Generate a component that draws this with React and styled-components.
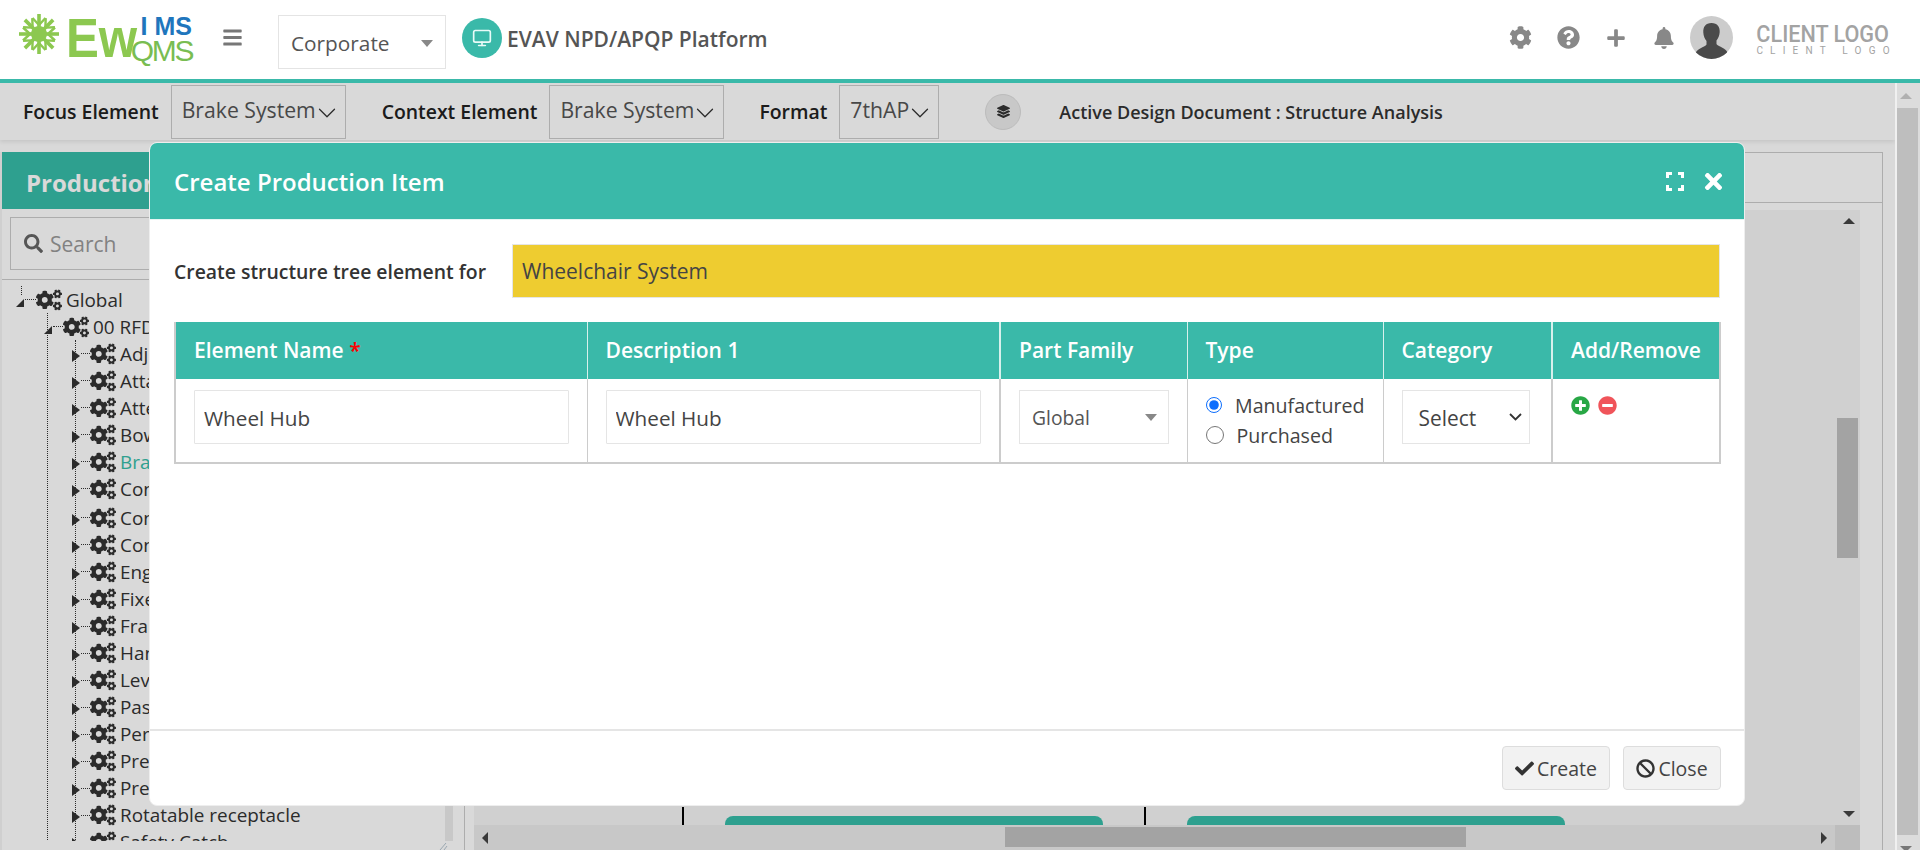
import React from "react";
import styled, { createGlobalStyle } from "styled-components";
import {
  FaBan,
  FaBars,
  FaBell,
  FaCheck,
  FaCog,
  FaCogs,
  FaLayerGroup,
  FaMinusCircle,
  FaPlus,
  FaPlusCircle,
  FaQuestionCircle,
  FaSearch,
  FaTimes,
} from "react-icons/fa";
import { ChevronDown, Monitor } from "lucide-react";

const TEAL = "#3ab9a9";

const selectArrow =
  "data:image/svg+xml,%3Csvg xmlns='http://www.w3.org/2000/svg' width='13' height='8' viewBox='0 0 13 8' fill='none' stroke='%23333' stroke-width='1.8'%3E%3Cpath d='M1 1l5.5 5.5L12 1'/%3E%3C/svg%3E";

const GlobalStyle = createGlobalStyle`
  html, body {
    margin: 0;
    padding: 0;
    height: 850px;
    overflow: hidden;
    background: #fff;
  }
  * { box-sizing: border-box; }
  body {
    font-family: "Open Sans", "Liberation Sans", sans-serif;
    color: #333;
  }
`;

const Page = styled.div`
  width: 1920px;
  height: 850px;
  display: flex;
  flex-direction: column;
`;

/* top bar */
const Header = styled.header`
  height: 83px;
  flex: none;
  display: flex;
  align-items: center;
  padding: 0 30px 4px 18px;
  background: #fff;
  border-bottom: 4px solid ${TEAL};
`;

const Logo = styled.div`
  width: 174px;
  height: 50px;
  display: flex;
  align-items: flex-start;
  flex: none;
`;

const LogoWord = styled.span`
  font-family: "Liberation Sans", sans-serif;
  font-size: 56px;
  font-weight: 700;
  line-height: 50px;
  color: #8cc850;
  margin-left: 6px;
  width: 66px;
  transform: scaleX(0.88);
  transform-origin: left center;
`;

const LogoStack = styled.div`
  display: flex;
  flex-direction: column;
  align-items: flex-end;
  font-family: "Liberation Sans", sans-serif;
  width: 60px;
  padding-top: 3px;
`;

const LogoIms = styled.span`
  font-size: 25px;
  line-height: 20px;
  font-weight: 700;
  color: #1f76bd;
`;

const LogoQms = styled.span`
  font-size: 30px;
  line-height: 30px;
  color: #79bd52;
  letter-spacing: -2.4px;
`;

const Burger = styled.div`
  margin-left: 30px;
  display: flex;
  color: #777;
  font-size: 21px;
`;

const CorpSelect = styled.div`
  margin: 9px 0 0 35px;
  width: 168px;
  height: 54px;
  border: 1px solid #e4e4e4;
  display: flex;
  align-items: center;
  justify-content: space-between;
  padding: 2px 12px 0 12px;
  font-size: 20.8px;
  color: #555;
`;

const Caret = styled.span`
  width: 0;
  height: 0;
  border-left: 6px solid transparent;
  border-right: 6px solid transparent;
  border-top: 7px solid #888;
`;

const MonitorBadge = styled.div`
  margin-left: 16px;
  width: 40px;
  height: 40px;
  border-radius: 50%;
  background: ${TEAL};
  color: #e9fbf8;
  display: flex;
  align-items: center;
  justify-content: center;
  flex: none;
`;

const PlatformTitle = styled.div`
  margin: 2px 0 0 5px;
  font-size: 21px;
  font-weight: 600;
  color: #555;
  white-space: nowrap;
`;

const HeaderRight = styled.div`
  margin-left: auto;
  display: flex;
  align-items: center;
`;

const IconSlot = styled.div`
  width: 48px;
  display: flex;
  justify-content: center;
  color: #888;
  font-size: ${(p) => p.$size || 23}px;
`;

const Avatar = styled.svg`
  width: 43px;
  height: 43px;
  margin-left: 2px;
  flex: none;
`;

const ClientLogo = styled.div`
  margin: 3px 0 0 23px;
  width: 134px;
  display: flex;
  flex-direction: column;
  align-items: center;
  color: #a3a3a3;
  font-family: "Roboto", sans-serif;
  line-height: 1;
`;

const ClientMain = styled.span`
  font-size: 24px;
  font-weight: 500;
  white-space: nowrap;
  transform: scaleX(0.9);
`;

const ClientSub = styled.span`
  font-size: 10px;
  letter-spacing: 7.2px;
  margin-right: -7.2px;
  white-space: nowrap;
`;

/* page under the modal */
const Body = styled.div`
  flex: 1;
  display: flex;
  position: relative;
  min-height: 0;
`;

const Main = styled.main`
  width: 1895px;
  flex: none;
  display: flex;
  flex-direction: column;
  position: relative;
  overflow: hidden;
`;

const Toolbar = styled.div`
  height: 57px;
  flex: none;
  display: flex;
  align-items: center;
  padding-left: 23px;
  box-shadow: 0 2px 4px rgba(0, 0, 0, 0.09);
`;

const ToolLabel = styled.span`
  font-size: 19.4px;
  font-weight: 600;
  color: #222;
  margin-right: 12px;
  white-space: nowrap;
`;

const ToolSelect = styled.div`
  width: ${(p) => p.$width}px;
  height: 54px;
  border: 1px solid #ccc;
  display: flex;
  align-items: center;
  padding: 0 0 5px 10px;
  font-size: 21.2px;
  color: #555;
  margin-right: ${(p) => p.$after}px;
  white-space: nowrap;
`;

const Chevron = styled(ChevronDown).attrs({ size: 30, strokeWidth: 1 })`
  color: #333;
  margin: 7px -8px 0 -4px;
  flex: none;
`;

const StackButton = styled.div`
  width: 36px;
  height: 36px;
  border-radius: 50%;
  background: #ebebeb;
  border: 1px solid #ddd;
  display: flex;
  align-items: center;
  justify-content: center;
  font-size: 13px;
  color: #333;
  margin: 0 38px 0 6px;
`;

const ActiveDoc = styled.span`
  font-size: 18px;
  font-weight: 600;
  color: #333;
  white-space: nowrap;
`;

const Workspace = styled.div`
  flex: 1;
  display: flex;
  min-height: 0;
  padding-top: 12px;
`;

/* left tree panel */
const TreePanel = styled.aside`
  width: 453px;
  flex: none;
  display: flex;
  flex-direction: column;
  border-left: 2px solid #f4f4f4;
`;

const PanelTitle = styled.div`
  height: 57px;
  flex: none;
  background: #37bca8;
  color: #fff;
  font-size: 24px;
  font-weight: 700;
  display: flex;
  align-items: center;
  padding: 4px 0 0 24px;
  white-space: nowrap;
`;

const SearchWrap = styled.div`
  flex: none;
  padding: 8px 8px 9px 8px;
  border-bottom: 1px solid #ccc;
`;

const SearchBox = styled.div`
  height: 53px;
  border: 1px solid #ccc;
  display: flex;
  align-items: center;
  gap: 7px;
  padding-left: 13px;
  font-size: 21px;
  color: #999;
  svg { color: #666; }
`;

const TreeScroller = styled.div`
  height: 561px;
  flex: none;
  display: flex;
  overflow: hidden;
`;

const TreeBody = styled.div`
  flex: 1;
  padding: 6px 0 0 14px;
  overflow: hidden;
`;

const TreeTrack = styled.div`
  width: 8px;
  flex: none;
  background: #ebebeb;
`;

const ResizeGrip = styled.svg`
  width: 12px;
  height: 10px;
  flex: none;
  align-self: flex-end;
  margin: 0 4px 0 0;
`;

const TreeBranch = styled.div`
  margin-left: ${(p) => p.$indent}px;
  border-left: 1px dotted #333;
`;

const TreeRow = styled.div`
  height: 27.05px;
  display: flex;
  align-items: center;
  margin-top: ${(p) => (p.$gap ? 2 : 0)}px;
  margin-left: ${(p) => (p.$root ? 0 : -4)}px;
  font-size: 18.9px;
  color: ${(p) => (p.$active ? "#37bca8" : "#333")};
  white-space: nowrap;
  position: relative;
`;

const Toggle = styled.span`
  flex: none;
  ${(p) =>
    p.$open
      ? `
    border-left: 8px solid transparent;
    border-bottom: 8px solid #333;
    height: 8px;
    width: 8px;
    margin-top: 6px;
    margin-right: 1px;
  `
      : `
    border-top: 6px solid transparent;
    border-bottom: 6px solid transparent;
    border-left: 8px solid #333;
    margin-top: 4px;
    margin-right: 1px;
    height: 0;
    width: 0;
  `}
`;

const Stub = styled.span`
  position: absolute;
  left: 5px;
  top: 0;
  height: 9px;
  border-left: 1px dotted #333;
`;

const Leader = styled.span`
  width: ${(p) => p.$width}px;
  border-top: 1px dotted #333;
  flex: none;
`;

const GearIcon = styled(FaCogs)`
  font-size: 26px;
  color: #333;
  flex: none;
  margin-right: 4px;
`;

/* right panel */
const ContentPanel = styled.section`
  width: 1419px;
  margin-left: 11px;
  margin-right: 11px;
  flex: none;
  border: 1px solid #ccc;
  border-bottom: none;
  display: flex;
  flex-direction: column;
`;

const PanelTabs = styled.div`
  height: 50px;
  flex: none;
  border-bottom: 1px solid #ccc;
`;

const ContentArea = styled.div`
  flex: 1;
  min-height: 0;
  margin: 7px 22px 0 9px;
  display: grid;
  grid-template-columns: 1fr 25px;
  grid-template-rows: 1fr 25px;
`;

const Viewport = styled.div`
  background: #f5f5f5;
  display: flex;
  align-items: flex-end;
  gap: 41px;
  padding-left: 208px;
  overflow: hidden;
`;

const Connector = styled.span`
  width: 2px;
  height: 18px;
  background: #000;
  flex: none;
`;

const NodeTop = styled.span`
  width: 378px;
  height: 9px;
  flex: none;
  background: #37bca8;
  border-radius: 8px 8px 0 0;
`;

const VScroll = styled.div`
  background: #f5f5f5;
  display: flex;
  flex-direction: column;
  align-items: center;
  padding-top: 208px;
  position: relative;
`;

const VThumb = styled.div`
  width: 21px;
  height: 140px;
  background: #c0c0c0;
`;

const HScroll = styled.div`
  background: #ebebeb;
  padding: 2px 0 3px 531px;
  position: relative;
`;

const HThumb = styled.div`
  width: 461px;
  height: 100%;
  background: #c0c0c0;
`;

const ScrollCorner = styled.div`
  background: #dedede;
`;

const Arrow = styled.span`
  position: absolute;
  width: 0;
  height: 0;
  ${(p) => p.$pos}
  ${(p) =>
    p.$dir === "up" &&
    `border-left:6px solid transparent;border-right:6px solid transparent;border-bottom:6px solid ${p.$color || "#444"};`}
  ${(p) =>
    p.$dir === "down" &&
    `border-left:6px solid transparent;border-right:6px solid transparent;border-top:6px solid ${p.$color || "#444"};`}
  ${(p) =>
    p.$dir === "left" &&
    `border-top:6px solid transparent;border-bottom:6px solid transparent;border-right:6px solid ${p.$color || "#444"};`}
  ${(p) =>
    p.$dir === "right" &&
    `border-top:6px solid transparent;border-bottom:6px solid transparent;border-left:6px solid ${p.$color || "#444"};`}
`;

const Backdrop = styled.div`
  position: absolute;
  inset: 0;
  background: rgba(0, 0, 0, 0.15);
`;

const PageScroll = styled.div`
  width: 25px;
  flex: none;
  position: relative;
  background: #dcdcdc;
  border-left: 2px solid #f0f0f0;
  padding: 25px 2px 15px 0;
`;

const PageThumb = styled.div`
  height: 100%;
  background: #bebebe;
`;

/* modal */
const Modal = styled.div`
  position: absolute;
  top: 59px;
  left: 149px;
  width: 1596px;
  height: 664px;
  background: #fff;
  border: 1px solid #eee;
  border-radius: 8px;
  overflow: hidden;
  display: flex;
  flex-direction: column;
`;

const ModalHeader = styled.div`
  height: 77px;
  flex: none;
  background: ${TEAL};
  display: flex;
  align-items: center;
  padding: 0 18px 0 24px;
  color: #fff;
  border-bottom: 1px solid #e6f5f3;
`;

const ModalTitle = styled.h4`
  margin: 0;
  font-size: 24px;
  font-weight: 600;
  flex: 1;
`;

const ExpandIcon = styled.svg`
  width: 18px;
  height: 19px;
  margin-right: 17px;
`;

const CloseX = styled(FaTimes)`
  font-size: 25px;
`;

const ModalBody = styled.div`
  flex: 1;
  padding: 24px 24px 0 24px;
`;

const TargetRow = styled.div`
  display: flex;
  align-items: center;
  height: 54px;
  margin-bottom: 24px;
`;

const TargetLabel = styled.label`
  width: 338px;
  flex: none;
  font-size: 19.4px;
  font-weight: 600;
  color: #333;
  white-space: nowrap;
`;

const TargetInput = styled.input`
  flex: 1;
  height: 54px;
  border: 1px solid #e5e5e5;
  background: #eecc30;
  font: inherit;
  font-size: 21px;
  color: #444;
  padding: 0 9px;
  outline: none;
`;

const ItemTable = styled.table`
  width: 1545px;
  table-layout: fixed;
  border-collapse: collapse;
  border: 2px solid #ccc;
  border-top: none;
`;

const Th = styled.th`
  height: 57px;
  background: ${TEAL};
  color: #fff;
  font-size: 21px;
  font-weight: 600;
  text-align: left;
  padding: 0 0 1px 18px;
  border-right: ${(p) => (p.$heavy ? 2 : 1)}px solid #d8f0ec;
  white-space: nowrap;
  &:last-child { border-right: none; }
`;

const Required = styled.span`
  color: #f00;
`;

const Td = styled.td`
  height: 84px;
  vertical-align: top;
  padding: 11px ${(p) => p.$right || 18}px 0 18px;
  border-right: ${(p) => (p.$heavy ? 2 : 1)}px solid #ccc;
  &:last-child { border-right: none; }
`;

const CellInput = styled.input`
  width: 100%;
  height: 54px;
  border: 1px solid #e5e5e5;
  border-radius: 1px;
  font: inherit;
  font-size: 20.7px;
  color: #444;
  padding: 1px 9px 0;
  outline: none;
`;

const FamilySelect = styled.div`
  height: 54px;
  border: 1px solid #e5e5e5;
  display: flex;
  align-items: center;
  justify-content: space-between;
  padding: 0 11px 0 12px;
  font-size: 19.3px;
  color: #555;
`;

const RadioStack = styled.div`
  display: flex;
  flex-direction: column;
  gap: 4px;
  margin-top: 2px;
`;

const RadioLine = styled.label`
  display: flex;
  align-items: center;
  gap: 13px;
  height: 26px;
  font-size: 19.6px;
  color: #444;
  white-space: nowrap;
  input {
    width: 18px;
    height: 18px;
    margin: 0;
    accent-color: #0d6efd;
  }
`;

const NativeSelect = styled.select`
  width: 100%;
  height: 54px;
  border: 1px solid #e5e5e5;
  appearance: none;
  background: #fff url("${selectArrow}") no-repeat right 7px center;
  font: inherit;
  font-size: 20.9px;
  color: #444;
  padding: 1px 12px 0 16px;
  outline: none;
`;

const RowActions = styled.div`
  display: flex;
  gap: 8px;
  font-size: 19px;
  margin-top: 6px;
`;

const AddIcon = styled(FaPlusCircle)`
  color: #28a745;
`;

const RemoveIcon = styled(FaMinusCircle)`
  color: #f0545a;
`;

const ModalFooter = styled.div`
  height: 76px;
  flex: none;
  border-top: 2px solid #e5e5e5;
  display: flex;
  justify-content: flex-end;
  align-items: center;
  gap: 13px;
  padding: 0 23px 0 0;
`;

const Button = styled.button`
  height: 44px;
  width: ${(p) => p.$width}px;
  border: 1px solid #ddd;
  border-radius: 4px;
  background: #f2f2f2;
  font: inherit;
  font-size: 19.5px;
  color: #444;
  display: flex;
  align-items: center;
  justify-content: center;
  gap: 3px;
  padding: 0;
  svg { color: #333; font-size: 19px; }
`;

const treeItems = [
  "Adjuster",
  "Attachment",
  "Attendant Brake",
  "Bowl",
  "Brake System",
  "Connector",
  "Control",
  "Cone",
  "Engine",
  "Fixed Base",
  "Frame",
  "Handle",
  "Lever",
  "Passenger Seat",
  "Peripheral",
  "Press Fit",
  "Pressure Plate",
  "Rotatable receptacle",
  "Safety Catch",
];

const Snowflake = () => (
  <svg width="42" height="42" viewBox="0 0 42 42" style={{ flex: "none" }}>
    {[0, 45, 90, 135, 180, 225, 270, 315].map((a) => (
      <g key={a} transform={`rotate(${a} 21 21)`} stroke="#8cc850" fill="none">
        <path d="M21 21V1" strokeWidth="3.6" />
        <path d="M21 12L14.5 5M21 12L27.5 5" strokeWidth="2.4" />
      </g>
    ))}
    <circle cx="21" cy="21" r="8" fill="#8cc850" />
  </svg>
);

const App = () => {
  return (
    <Page>
      <GlobalStyle />
      <Header>
        <Logo>
          <Snowflake />
          <LogoWord>Ew</LogoWord>
          <LogoStack>
            <LogoIms>I MS</LogoIms>
            <LogoQms>QMS</LogoQms>
          </LogoStack>
        </Logo>
        <Burger>
          <FaBars />
        </Burger>
        <CorpSelect>
          Corporate
          <Caret />
        </CorpSelect>
        <MonitorBadge>
          <Monitor size={20} />
        </MonitorBadge>
        <PlatformTitle>EVAV NPD/APQP Platform</PlatformTitle>
        <HeaderRight>
          <IconSlot>
            <FaCog />
          </IconSlot>
          <IconSlot>
            <FaQuestionCircle />
          </IconSlot>
          <IconSlot $size={20}>
            <FaPlus />
          </IconSlot>
          <IconSlot $size={22}>
            <FaBell />
          </IconSlot>
          <Avatar viewBox="0 0 43 43">
            <defs>
              <clipPath id="avatarClip">
                <circle cx="21.5" cy="21.5" r="21.5" />
              </clipPath>
            </defs>
            <circle cx="21.5" cy="21.5" r="21.5" fill="#ccc" />
            <g clipPath="url(#avatarClip)" fill="#4a4a4a">
              <path d="M21.5 7c-6 0-8.5 4-8.2 9.5.2 3.4 1.4 6.4 3.2 8.6v3.4c0 1.6-7.5 3.2-10.5 7.5V43h31v-7.5c-3-4.3-10.5-5.9-10.5-7.5v-3.4c1.8-2.2 3-5.2 3.2-8.6C30 11 27.5 7 21.5 7z" />
            </g>
          </Avatar>
          <ClientLogo>
            <ClientMain>CLIENT LOGO</ClientMain>
            <ClientSub>CLIENT LOGO</ClientSub>
          </ClientLogo>
        </HeaderRight>
      </Header>

      <Body>
        <Main>
          <Toolbar>
            <ToolLabel>Focus Element</ToolLabel>
            <ToolSelect $width={175} $after={36}>
              Brake System <Chevron />
            </ToolSelect>
            <ToolLabel>Context Element</ToolLabel>
            <ToolSelect $width={175} $after={35}>
              Brake System <Chevron />
            </ToolSelect>
            <ToolLabel>Format</ToolLabel>
            <ToolSelect $width={100} $after={40}>
              7thAP <Chevron />
            </ToolSelect>
            <StackButton>
              <FaLayerGroup />
            </StackButton>
            <ActiveDoc>Active Design Document : Structure Analysis</ActiveDoc>
          </Toolbar>

          <Workspace>
            <TreePanel>
              <PanelTitle>Production</PanelTitle>
              <SearchWrap>
                <SearchBox>
                  <FaSearch size={19} />
                  Search
                </SearchBox>
              </SearchWrap>
              <TreeScroller>
                <TreeBody>
                  <TreeRow $root>
                    <Stub />
                    <Toggle $open />
                    <Leader $width={11} />
                    <GearIcon />
                    Global
                  </TreeRow>
                  <TreeBranch $indent={31}>
                    <TreeRow>
                      <Toggle $open />
                      <Leader $width={10} />
                      <GearIcon />
                      00 RFDs
                    </TreeRow>
                    <TreeBranch $indent={27}>
                      {treeItems.map((name, i) => (
                        <TreeRow key={name} $active={name === "Brake System"} $gap={i === 6}>
                          <Toggle />
                          <Leader $width={9} />
                          <GearIcon />
                          {name}
                        </TreeRow>
                      ))}
                    </TreeBranch>
                  </TreeBranch>
                </TreeBody>
                <TreeTrack />
              </TreeScroller>
              <ResizeGrip viewBox="0 0 12 10" fill="none" stroke="#b4c4d0" strokeWidth="1">
                <path d="M3 9L9 2M7 9L10 5" />
              </ResizeGrip>
            </TreePanel>

            <ContentPanel>
              <PanelTabs />
              <ContentArea>
                <Viewport>
                  <Connector />
                  <NodeTop />
                  <Connector />
                  <NodeTop />
                </Viewport>
                <VScroll>
                  <Arrow $dir="up" $pos="top:8px;left:8px;" />
                  <VThumb />
                  <Arrow $dir="down" $pos="bottom:8px;left:8px;" />
                </VScroll>
                <HScroll>
                  <Arrow $dir="left" $pos="top:7px;left:8px;" />
                  <HThumb />
                  <Arrow $dir="right" $pos="top:7px;right:8px;" />
                </HScroll>
                <ScrollCorner />
              </ContentArea>
            </ContentPanel>
          </Workspace>
          <Backdrop />
        </Main>

        <PageScroll>
          <Arrow $dir="up" $color="#b0b0b0" $pos="top:10px;left:3px;" />
          <PageThumb />
          <Arrow $dir="down" $color="#777" $pos="bottom:-2px;left:3px;" />
        </PageScroll>

        <Modal>
          <ModalHeader>
            <ModalTitle>Create Production Item</ModalTitle>
            <ExpandIcon viewBox="0 0 18 19" fill="none" stroke="#fff" strokeWidth="3">
              <path d="M1.5 6V1.5H6M12 1.5H16.5V6M16.5 13V17.5H12M6 17.5H1.5V13" />
            </ExpandIcon>
            <CloseX />
          </ModalHeader>

          <ModalBody>
            <TargetRow>
              <TargetLabel>Create structure tree element for</TargetLabel>
              <TargetInput readOnly value="Wheelchair System" />
            </TargetRow>

            <ItemTable>
              <colgroup>
                <col style={{ width: 412 }} />
                <col style={{ width: 413 }} />
                <col style={{ width: 187 }} />
                <col style={{ width: 196 }} />
                <col style={{ width: 169 }} />
                <col style={{ width: 168 }} />
              </colgroup>
              <thead>
                <tr>
                  <Th>
                    Element Name <Required>*</Required>
                  </Th>
                  <Th $heavy>Description 1</Th>
                  <Th>Part Family</Th>
                  <Th>Type</Th>
                  <Th $heavy>Category</Th>
                  <Th>Add/Remove</Th>
                </tr>
              </thead>
              <tbody>
                <tr>
                  <Td>
                    <CellInput readOnly value="Wheel Hub" />
                  </Td>
                  <Td $heavy>
                    <CellInput readOnly value="Wheel Hub" />
                  </Td>
                  <Td>
                    <FamilySelect>
                      Global
                      <Caret />
                    </FamilySelect>
                  </Td>
                  <Td>
                    <RadioStack>
                      <RadioLine>
                        <input type="radio" name="type" defaultChecked />
                        Manufactured
                      </RadioLine>
                      <RadioLine>
                        <input type="radio" name="type" />
                        Purchased
                      </RadioLine>
                    </RadioStack>
                  </Td>
                  <Td $heavy $right={21}>
                    <NativeSelect defaultValue="Select">
                      <option>Select</option>
                    </NativeSelect>
                  </Td>
                  <Td>
                    <RowActions>
                      <AddIcon />
                      <RemoveIcon />
                    </RowActions>
                  </Td>
                </tr>
              </tbody>
            </ItemTable>
          </ModalBody>

          <ModalFooter>
            <Button $width={108}>
              <FaCheck />
              Create
            </Button>
            <Button $width={98}>
              <FaBan />
              Close
            </Button>
          </ModalFooter>
        </Modal>
      </Body>
    </Page>
  );
};

export default App;
